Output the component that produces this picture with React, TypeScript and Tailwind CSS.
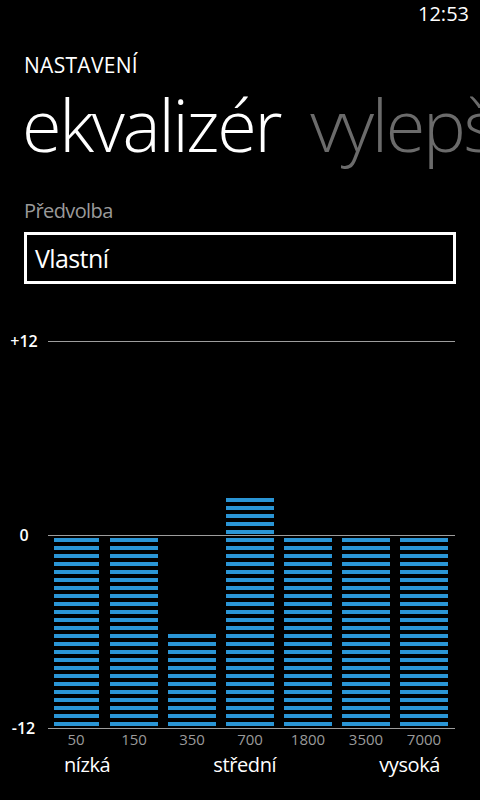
import React from "react";

const bars = [
  { f: "50", n: 24 },
  { f: "150", n: 24 },
  { f: "350", n: 12 },
  { f: "700", n: 29 },
  { f: "1800", n: 24 },
  { f: "3500", n: 24 },
  { f: "7000", n: 24 },
];

export default function App() {
  return (
    <div className="w-[480px] h-[800px] bg-black text-white overflow-hidden font-['Open_Sans',sans-serif] flex flex-col">
      <div className="h-[32px] pt-[4px] pr-[11px] flex justify-end text-[20px] leading-[20px]">12:53</div>
      <div className="pl-6 mt-[21px] text-[21px] leading-[24px] tracking-[0.3px]">NASTAVENÍ</div>
      <div className="flex whitespace-nowrap pl-[22px] mt-[11px] text-[72px] leading-[72px] font-light tracking-[-2.3px]">
        <span>ekvalizér</span>
        <span className="ml-[30px] text-[#6b6b6b]">vylepšení</span>
      </div>
      <div className="pl-6 mt-[39px] text-[20px] leading-[24px] tracking-[-0.6px] text-[#9a9a9a]">Předvolba</div>
      <div className="mx-6 mt-[9px] h-[52px] border-[3px] border-white flex items-center pl-2 text-[25px] leading-[25px] tracking-[-0.6px]">
        Vlastní
      </div>
      <div className="relative ml-12 mt-[57px] w-[407px] h-[388px] pb-[3px] pl-1 flex items-end gap-[10px]">
        <div className="absolute left-0 right-0 top-0 h-px bg-[#9d9d9d]" />
        <div className="absolute left-0 right-0 top-[194px] h-px bg-[#9d9d9d]" />
        <div className="absolute left-0 right-0 top-[387px] h-px bg-[#9d9d9d]" />
        <div className="absolute left-[-48px] w-[48px] top-[-10px] h-5 flex items-center justify-center text-[16px] font-semibold">+12</div>
        <div className="absolute left-[-48px] w-[48px] top-[184px] h-5 flex items-center justify-center text-[16px] font-semibold">0</div>
        <div className="absolute left-[-48px] w-[47px] top-[377px] h-5 flex items-center justify-center text-[16px] font-semibold">-12</div>
        {bars.map((b, idx) => (
          <div key={b.f} className={idx === 0 ? "w-[45px] ml-[2px] mr-[1px] flex flex-col gap-1" : "w-12 flex flex-col gap-1"}>
            {Array.from({ length: b.n }).map((_, i) => (
              <div key={i} className="h-1 bg-[#2a95d5]" />
            ))}
          </div>
        ))}
      </div>
      <div className="ml-12 pl-1 flex gap-[10px] text-[15px] leading-[20px] text-[#9a9a9a]">
        {bars.map((b) => (
          <div key={b.f} className="w-12 text-center">{b.f}</div>
        ))}
      </div>
      <div className="mt-[2px] pl-[64px] pr-[40px] flex justify-between text-[20px] leading-[28px] tracking-[-0.4px]">
        <span>nízká</span>
        <span>střední</span>
        <span>vysoká</span>
      </div>
    </div>
  );
}
